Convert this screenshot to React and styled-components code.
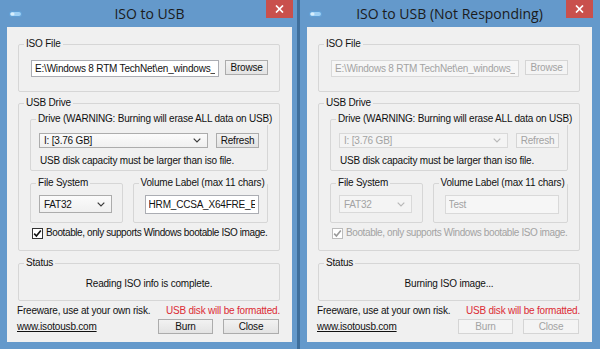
import React from "react";
import styled, { createGlobalStyle, css } from "styled-components";

const GlobalStyle = createGlobalStyle`
  html, body {
    margin: 0;
    padding: 0;
  }
  body {
    width: 600px;
    height: 349px;
    overflow: hidden;
    font-family: "Liberation Sans", Arial, sans-serif;
    color: #111;
  }
`;

const windows = [
  {
    title: "ISO to USB",
    width: 297,
    right: 5,
    disabled: false,
    volume: "HRM_CCSA_X64FRE_EN-US_DV5",
    status: "Reading ISO info is complete.",
  },
  {
    title: "ISO to USB (Not Responding)",
    width: 300,
    right: 8,
    disabled: true,
    volume: "Test",
    status: "Burning ISO image...",
  },
];

const IsoToUsbWindow = ({ title, width, right, disabled, volume, status }) => (
  <Frame $width={width} $right={right}>
    <TitleBar>
      <AppIcon width="13" height="6" viewBox="0 0 13 6">
        <rect x="0.5" y="0.5" width="12" height="5" rx="2.5" fill="#9fd0f5" stroke="#5f9fd6" />
        <rect x="1.5" y="1.5" width="4" height="3" rx="1.5" fill="#d8eefc" />
      </AppIcon>
      <Title>{title}</Title>
      <CloseButton aria-label="Close">
        <svg width="9" height="8" viewBox="0 0 9 8">
          <path d="M1 0.5 L8 7.5 M8 0.5 L1 7.5" stroke="#fff" strokeWidth="1.7" />
        </svg>
      </CloseButton>
    </TitleBar>

    <Client>
      <Group>
        <Legend>ISO File</Legend>
        <Row $pad="10px 11px 14px 12px" $gap={6}>
          <TextBox
            $width={188}
            readOnly
            disabled={disabled}
            value="E:\Windows 8 RTM TechNet\en_windows_8_x64_dvd_915440.iso"
          />
          <Button $width={43} disabled={disabled}>
            Browse
          </Button>
        </Row>
      </Group>

      <Group $top={5}>
        <Legend>USB Drive</Legend>
        <Stack $pad="4px 11px 11px 11px">
          <Group>
            <Legend>Drive (WARNING: Burning will erase ALL data on USB)</Legend>
            <Stack $pad="8px 8px 3px 8px">
              <Row $gap={8}>
                <Combo $width={169} $height={15} $disabled={disabled}>
                  <span>I: [3.76 GB]</span>
                  <Chevron />
                </Combo>
                <Button $width={43} disabled={disabled}>
                  Refresh
                </Button>
              </Row>
              <Note>USB disk capacity must be larger than iso file.</Note>
            </Stack>
          </Group>

          <Row $gap={10} $top={6}>
            <Group $width={93}>
              <Legend>File System</Legend>
              <Row $pad="6px 10px 9px 8px">
                <Combo $width={73} $height={18} $disabled={disabled}>
                  <span>FAT32</span>
                  <Chevron />
                </Combo>
              </Row>
            </Group>
            <Group $width={136}>
              <Legend>Volume Label (max 11 chars)</Legend>
              <Row $pad="6px 9px 8px 11px">
                <TextBox $width={114} $height={19} readOnly disabled={disabled} value={volume} />
              </Row>
            </Group>
          </Row>

          <CheckRow $disabled={disabled}>
            <CheckBox $disabled={disabled}>
              <svg width="9" height="9" viewBox="0 0 9 9">
                <path d="M1.2 4.6 L3.4 7 L7.8 1.4" fill="none" strokeWidth="1.6" />
              </svg>
            </CheckBox>
            <span>Bootable, only supports Windows bootable ISO image.</span>
          </CheckRow>
        </Stack>
      </Group>

      <Group $top={6}>
        <Legend>Status</Legend>
        <StatusText>{status}</StatusText>
      </Group>

      <InfoRow>
        <span>Freeware, use at your own risk.</span>
        <Warning>USB disk will be formatted.</Warning>
      </InfoRow>

      <FooterRow>
        <SiteLink href="#">www.isotousb.com</SiteLink>
        <Row $gap={10}>
          <Button $width={55} disabled={disabled}>
            Burn
          </Button>
          <Button $width={56} disabled={disabled}>
            Close
          </Button>
        </Row>
      </FooterRow>
    </Client>
  </Frame>
);

const Chevron = () => (
  <ChevronSvg width="8" height="5" viewBox="0 0 8 5">
    <path d="M0.7 0.7 L4 4 L7.3 0.7" fill="none" strokeWidth="1.2" />
  </ChevronSvg>
);

const App = () => (
  <>
    <GlobalStyle />
    <Desktop>
      {windows.map((w) => (
        <IsoToUsbWindow key={w.title} {...w} />
      ))}
    </Desktop>
  </>
);

const Desktop = styled.div`
  display: flex;
  gap: 3px;
  width: 600px;
  height: 349px;
  background: #3f6f9c;
`;

const Frame = styled.div`
  box-sizing: border-box;
  width: ${({ $width }) => $width}px;
  display: flex;
  flex-direction: column;
  padding: 0 ${({ $right }) => $right}px 7px 7px;
  background: #6499cb;
`;

const TitleBar = styled.div`
  height: 27px;
  flex: none;
  display: grid;
  grid-template-columns: 1fr auto 1fr;
  align-items: start;
`;

const AppIcon = styled.svg`
  margin: 11px 0 0 2px;
`;

const Title = styled.div`
  font-family: "Open Sans", "Noto Sans", sans-serif;
  font-size: 14px;
  line-height: 28px;
  color: #1b1b1b;
  white-space: nowrap;
`;

const CloseButton = styled.div`
  justify-self: end;
  width: 27px;
  height: 18px;
  margin-right: -1px;
  display: flex;
  align-items: center;
  justify-content: center;
  background: #c9504c;
`;

const Client = styled.div`
  flex: 1;
  min-height: 0;
  display: flex;
  flex-direction: column;
  padding: 11px 12px 0 11px;
  background: #f0f0f0;
  font-size: 10px;
  letter-spacing: -0.2px;
  white-space: nowrap;
`;

const Group = styled.fieldset`
  box-sizing: border-box;
  min-width: 0;
  margin: ${({ $top }) => $top || 0}px 0 0 0;
  padding: 0;
  width: ${({ $width }) => ($width ? `${$width}px` : "auto")};
  border: 1px solid #d6d6d6;
  border-radius: 2px;
`;

const Legend = styled.legend`
  margin-left: 5px;
  padding: 0 2px;
  font-size: 10px;
  line-height: 12px;
  white-space: nowrap;
  color: #111;
`;

const Row = styled.div`
  display: flex;
  align-items: flex-start;
  gap: ${({ $gap }) => $gap || 0}px;
  padding: ${({ $pad }) => $pad || 0};
  margin-top: ${({ $top }) => $top || 0}px;
`;

const Stack = styled.div`
  display: flex;
  flex-direction: column;
  padding: ${({ $pad }) => $pad || 0};
`;

const disabledText = css`
  color: #a3a3a3;
`;

const TextBox = styled.input`
  box-sizing: border-box;
  width: ${({ $width }) => $width}px;
  height: ${({ $height }) => $height || 17}px;
  margin: 0;
  padding: 0 3px;
  border: 1px solid #abadb3;
  background: #fff;
  font-family: inherit;
  font-size: 10px;
  letter-spacing: -0.2px;
  color: #111;
  outline: none;

  &:disabled {
    ${disabledText};
    border-color: #d9d9d9;
    background: #f6f6f6;
  }
`;

const Button = styled.button`
  box-sizing: border-box;
  width: ${({ $width }) => $width}px;
  height: 15px;
  margin: 0;
  padding: 0;
  border: 1px solid #acacac;
  background: linear-gradient(#f2f2f2, #e3e3e3);
  font-family: inherit;
  font-size: 10px;
  letter-spacing: -0.2px;
  line-height: 13px;
  color: #111;

  &:disabled {
    ${disabledText};
    border-color: #d5d5d5;
    background: #f4f4f4;
  }
`;

const Combo = styled.div`
  box-sizing: border-box;
  width: ${({ $width }) => $width}px;
  height: ${({ $height }) => $height}px;
  display: flex;
  align-items: center;
  justify-content: space-between;
  padding: 0 6px 0 4px;
  border: 1px solid ${({ $disabled }) => ($disabled ? "#d9d9d9" : "#acacac")};
  background: ${({ $disabled }) => ($disabled ? "#f4f4f4" : "linear-gradient(#fbfbfb, #f0f0f0)")};
  color: ${({ $disabled }) => ($disabled ? "#a3a3a3" : "#111")};
  stroke: ${({ $disabled }) => ($disabled ? "#b8b8b8" : "#3a3a3a")};
`;

const ChevronSvg = styled.svg`
  flex: none;
`;

const Note = styled.div`
  margin-top: 7px;
  margin-left: 1px;
  line-height: 12px;
`;

const CheckRow = styled.label`
  display: flex;
  align-items: center;
  gap: 3px;
  margin: 4px 0 0 2px;
  line-height: 12px;
  letter-spacing: -0.4px;
  ${({ $disabled }) => $disabled && disabledText};
`;

const CheckBox = styled.span`
  box-sizing: border-box;
  flex: none;
  width: 11px;
  height: 11px;
  display: flex;
  align-items: center;
  justify-content: center;
  border: 1px solid ${({ $disabled }) => ($disabled ? "#bcbcbc" : "#333")};
  background: #fff;
  stroke: ${({ $disabled }) => ($disabled ? "#9a9a9a" : "#111")};
`;

const StatusText = styled.div`
  padding: 9px 0 10px;
  text-align: center;
  line-height: 12px;
`;

const InfoRow = styled.div`
  display: flex;
  justify-content: space-between;
  margin: 4px 0 0 -1px;
  line-height: 12px;
`;

const Warning = styled.span`
  color: #dc2b34;
`;

const FooterRow = styled.div`
  display: flex;
  justify-content: space-between;
  align-items: center;
  margin: 2px 1px 0 -1px;
`;

const SiteLink = styled.a`
  color: #111;
  text-decoration: underline;
  line-height: 12px;
`;

export default App;
